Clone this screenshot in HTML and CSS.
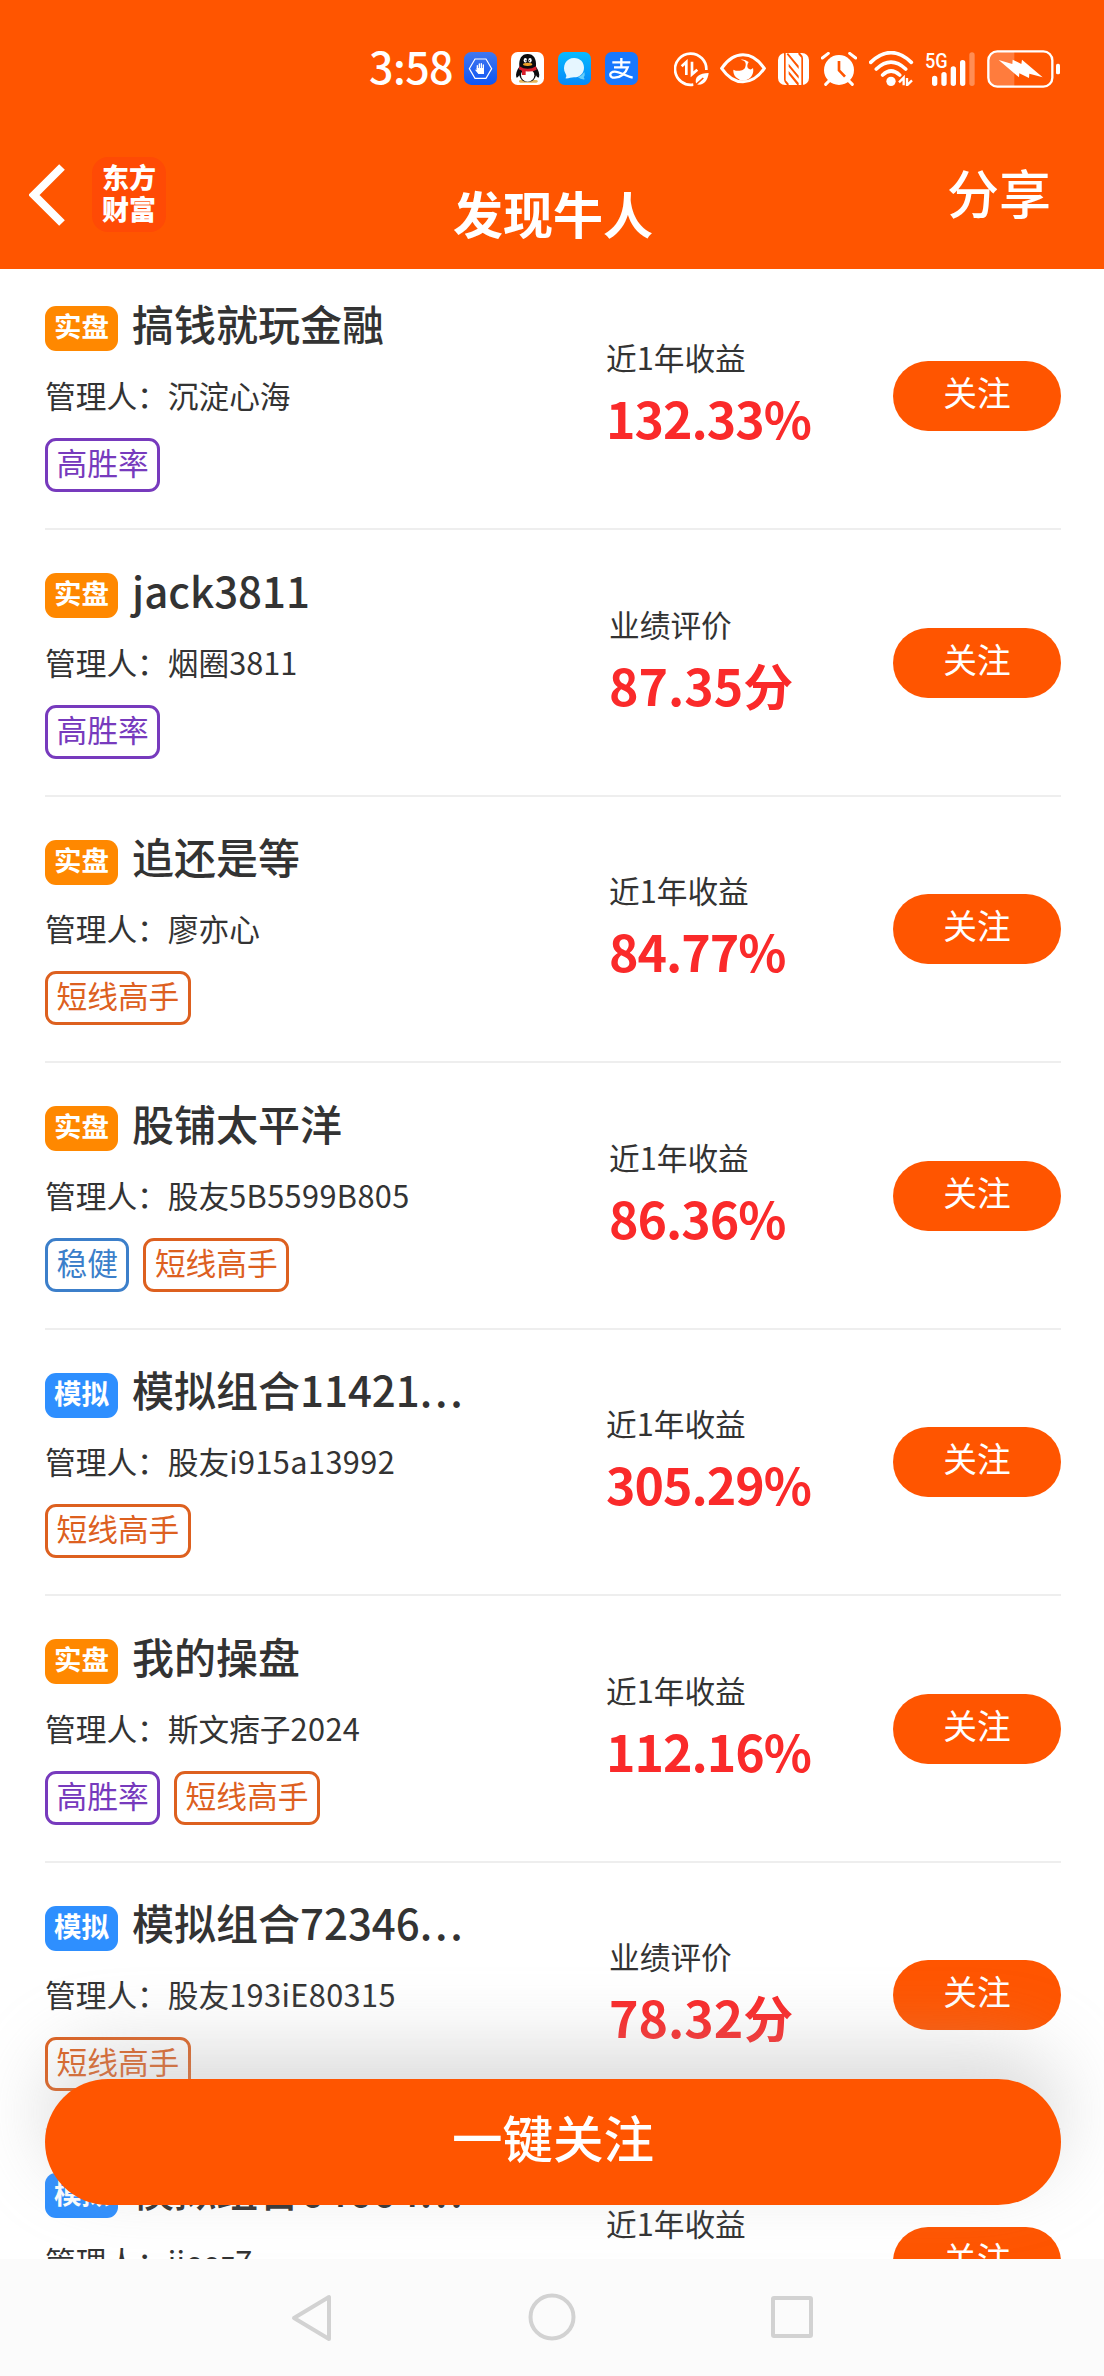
FILE: index.html
```html
<!DOCTYPE html>
<html lang="zh-CN">
<head>
  <meta charset="UTF-8" />
  <meta name="viewport" content="width=device-width, initial-scale=1.0"/>
  <title>发现牛人</title>
  <link rel="stylesheet" href="styles.css">
</head>
<body>

  <header class="header">
    <div class="status-bar">
      <span class="clock">3:58</span>
      <div class="app-icons">
        <svg width="33" height="33" viewBox="0 0 99 99">
          <defs>
            <linearGradient id="handBg" x1="0" y1="0" x2="0" y2="1"><stop offset="0" stop-color="#4277ee"/><stop offset="1" stop-color="#0d55f5"/></linearGradient>
          </defs>
          <rect width="99" height="99" rx="22" fill="url(#handBg)"/>
          <path d="M33 21H66L83 50 66 79H33L16 50Z" fill="none" stroke="#fff" stroke-width="3.5"/>
          <path d="M40 50V41M46 48V36M52 48V35M58 50V39" stroke="#fff" stroke-width="4" stroke-linecap="round"/>
          <path d="M38 48H60V66H43L34 55Q34 51 38 54Z" fill="#fff"/>
        </svg>
        <svg width="33" height="33" viewBox="0 0 99 99">
          <rect width="99" height="99" rx="20" fill="#fff"/>
          <path d="M28 88H76" stroke="#e5b75a" stroke-width="8" stroke-linecap="round"/>
          <path d="M25 44C23 20 32 6 50 6S77 20 75 44C82 54 87 66 84 76 80 79 77 73 75 70 72 83 64 90 50 90S28 83 25 70C22 74 19 79 16 76 13 66 18 54 25 44Z" fill="#0c0c0e"/>
          <ellipse cx="50" cy="70" rx="20" ry="19" fill="#fff"/>
          <ellipse cx="43" cy="25" rx="5" ry="7" fill="#fff"/>
          <ellipse cx="57" cy="25" rx="5" ry="7" fill="#fff"/>
          <circle cx="45" cy="26" r="2" fill="#111"/>
          <circle cx="55" cy="26" r="2" fill="#111"/>
          <ellipse cx="50" cy="37" rx="14" ry="5" fill="#eea329"/>
          <path d="M25 43Q50 58 75 43L77 53Q62 61 44 58V69H33V56L24 52Z" fill="#d81e2b"/>
        </svg>
        <svg width="33" height="33" viewBox="0 0 99 99">
          <defs>
            <linearGradient id="chatBg" x1="0" y1="0" x2="0" y2="1"><stop offset="0" stop-color="#08baff"/><stop offset="1" stop-color="#0789f8"/></linearGradient>
          </defs>
          <rect width="99" height="99" rx="20" fill="url(#chatBg)"/>
          <path d="M60 76Q72 72 79 60 82 72 77 75L80 82Q68 83 60 76Z" fill="#68cffb"/>
          <path d="M48 18C67 18 78 31 78 47S66 76 48 76C39 76 32 80 22 79 27 74 25 69 22 64 11 43 24 18 48 18Z" fill="#e6f6ff"/>
        </svg>
        <svg width="33" height="33" viewBox="0 0 99 99">
          <rect width="99" height="99" rx="20" fill="#1778fe"/>
          <path d="M22 31H76M49 18V45M27 46H68C62 64 47 77 29 77 12 77 11 59 29 59 45 59 63 73 83 77" fill="none" stroke="#fff" stroke-width="7"/>
        </svg>
      </div>
      <div class="system-icons">
        <svg width="35" height="36" viewBox="0 0 105 108">
          <path d="M97 57A47 47 0 1 0 58 101" fill="none" stroke="#fff" stroke-width="8"/>
          <path d="M23 46 37 33V72M54 32V70L70 56" fill="none" stroke="#fff" stroke-width="8"/>
          <path d="M104 66C76 66 59 78 67 100 88 105 101 90 104 66Z" fill="#fff"/>
          <path d="M60 106 88 81" stroke="#ff5500" stroke-width="5"/>
        </svg>
        <svg class="eye" width="46" height="31" viewBox="0 0 138 93">
          <path d="M5 46C42-8 96-8 133 46 96 100 42 100 5 46Z" fill="none" stroke="#fff" stroke-width="9"/>
          <path d="M62 20C78 22 79 33 76 41 75 51 56 58 40 50A30 30 0 1 0 99 45Q92 53 84 46 79 38 86 27 74 17 62 20Z" fill="#fff"/>
        </svg>
        <svg class="nfc" width="31" height="32" viewBox="0 0 93 96">
          <rect width="93" height="96" rx="21" fill="#fff"/>
          <path d="M18 0H23V82L32 92V96H27Q18 88 18 80Z" fill="#ff5500"/>
          <path d="M75 96H70V14L61 4V0H66Q75 8 75 16Z" fill="#ff5500"/>
          <path d="M32 32 62 68V77L32 41ZM32 54 62 90V96H58L32 64ZM30 0 62 38V48L26 4Z" fill="#ff5500"/>
        </svg>
        <svg class="alarm" width="36" height="34" viewBox="0 0 108 102">
          <circle cx="54" cy="54" r="45" fill="#fff"/>
          <path d="M4 18 22 4M86 4 104 18M25 86 14 97M83 86 94 97" stroke="#fff" stroke-width="9" stroke-linecap="round"/>
          <path d="M54 27V55L72 74" fill="none" stroke="#ff5500" stroke-width="8"/>
        </svg>
        <svg class="wifi" width="45" height="35" viewBox="0 0 135 105">
          <path d="M5 34Q66-24 127 34M22 54Q66 13 110 54M41 72Q66 48 92 72" fill="none" stroke="#fff" stroke-width="11" stroke-linecap="round"/>
          <circle cx="66" cy="91" r="14" fill="#fff"/>
          <path d="M90 94 104 80V103M114 81V103L129 88" fill="none" stroke="#fff" stroke-width="7"/>
        </svg>
        <svg class="signal" width="51" height="36" viewBox="0 0 153 108">
          <text x="0" y="51" class="net-label" textLength="68" lengthAdjust="spacingAndGlyphs">5G</text>
          <path d="M29 82V97M57 71V97M85 54V97M113 35V97" stroke="#fff" stroke-width="16" stroke-linecap="round"/>
          <path d="M141 12V97" stroke="#ff8d54" stroke-width="16" stroke-linecap="round"/>
        </svg>
        <svg class="battery" width="74" height="38" viewBox="0 0 222 114">
          <path d="M32 5H82V109H32Q6 108 6 83V31Q6 6 32 5Z" fill="#ff7c3d"/>
          <rect x="4" y="4" width="192" height="106" rx="27" fill="none" stroke="#fff" stroke-width="7"/>
          <path d="M35 30 76 42 77 29 103 42 105 29 167 82 127 71 126 84 97 70 96 82Z" fill="#fff"/>
          <rect x="207" y="41" width="12" height="32" rx="5" fill="#fff"/>
        </svg>
      </div>
    </div>

    <div class="title-bar">
      <div class="title-left">
        <svg class="back" width="38" height="62" viewBox="0 0 38 62"><path d="M33 3 5 31 33 59" fill="none" stroke="#fff" stroke-width="8"/></svg>
        <div class="logo">东方<br>财富</div>
      </div>
      <h1>发现牛人</h1>
      <span class="share">分享</span>
    </div>
  </header>

  <main class="list">
    <div class="row">
      <div class="info">
        <div class="name"><span class="badge real">实盘</span>搞钱就玩金融</div>
        <div class="manager">管理人：沉淀心海</div>
        <div class="tags"><span class="tag purple">高胜率</span></div>
      </div>
      <div class="stat wide"><span class="label">近1年收益</span><span class="value percent">132.33%</span></div>
      <button class="follow">关注</button>
    </div>

    <div class="row">
      <div class="info">
        <div class="name"><span class="badge real">实盘</span>jack3811</div>
        <div class="manager">管理人：烟圈3811</div>
        <div class="tags"><span class="tag purple">高胜率</span></div>
      </div>
      <div class="stat"><span class="label">业绩评价</span><span class="value">87.35分</span></div>
      <button class="follow">关注</button>
    </div>

    <div class="row">
      <div class="info">
        <div class="name"><span class="badge real">实盘</span>追还是等</div>
        <div class="manager">管理人：廖亦心</div>
        <div class="tags"><span class="tag orange">短线高手</span></div>
      </div>
      <div class="stat"><span class="label">近1年收益</span><span class="value percent">84.77%</span></div>
      <button class="follow">关注</button>
    </div>

    <div class="row">
      <div class="info">
        <div class="name"><span class="badge real">实盘</span>股铺太平洋</div>
        <div class="manager">管理人：股友<span class="code">5B5599B805</span></div>
        <div class="tags"><span class="tag blue">稳健</span><span class="tag orange">短线高手</span></div>
      </div>
      <div class="stat"><span class="label">近1年收益</span><span class="value percent">86.36%</span></div>
      <button class="follow">关注</button>
    </div>

    <div class="row">
      <div class="info">
        <div class="name"><span class="badge sim">模拟</span>模拟组合11421<span class="dots">...</span></div>
        <div class="manager">管理人：股友<span class="code">i915a13992</span></div>
        <div class="tags"><span class="tag orange">短线高手</span></div>
      </div>
      <div class="stat wide"><span class="label">近1年收益</span><span class="value percent">305.29%</span></div>
      <button class="follow">关注</button>
    </div>

    <div class="row">
      <div class="info">
        <div class="name"><span class="badge real">实盘</span>我的操盘</div>
        <div class="manager">管理人：斯文痞子<span class="code">2024</span></div>
        <div class="tags"><span class="tag purple">高胜率</span><span class="tag orange">短线高手</span></div>
      </div>
      <div class="stat wide"><span class="label">近1年收益</span><span class="value percent">112.16%</span></div>
      <button class="follow">关注</button>
    </div>

    <div class="row">
      <div class="info">
        <div class="name"><span class="badge sim">模拟</span>模拟组合72346<span class="dots">...</span></div>
        <div class="manager">管理人：股友<span class="code">193iE80315</span></div>
        <div class="tags"><span class="tag orange">短线高手</span></div>
      </div>
      <div class="stat"><span class="label">业绩评价</span><span class="value">78.32分</span></div>
      <button class="follow">关注</button>
    </div>

    <div class="row">
      <div class="info">
        <div class="name"><span class="badge sim">模拟</span>模拟组合64664<span class="dots">...</span></div>
        <div class="manager">管理人：<span class="code">jjeez7</span></div>
      </div>
      <div class="stat wide"><span class="label">近1年收益</span></div>
      <button class="follow">关注</button>
    </div>

    <button class="follow-all">一键关注</button>
  </main>

  <nav class="nav-bar">
    <svg width="50" height="52" viewBox="0 0 50 52"><path d="M42 5V47L7 26Z"/></svg>
    <svg width="50" height="52" viewBox="0 0 50 52"><circle cx="25" cy="25" r="21.5"/></svg>
    <svg width="50" height="52" viewBox="0 0 50 52"><rect x="6" y="6" width="38" height="38" rx="1"/></svg>
  </nav>

</body>
</html>
```
FILE: styles.css
```css
* {
  box-sizing: border-box;
}

body {
  margin: 0;
  height: 2376px;
  display: flex;
  flex-direction: column;
  background-color: #fff;
  color: #333;
  font-family: "Noto Sans CJK SC", sans-serif;
  overflow: hidden;
}

button {
  border: none;
  font-family: inherit;
  color: #fff;
  background-color: #ff5500;
}

/* Header */
.header {
  height: 269px;
  flex: none;
  background-color: #ff5500;
  color: #fff;
}

.status-bar {
  height: 137px;
  display: flex;
  justify-content: flex-end;
  align-items: center;
  padding-right: 43px;
}

.clock {
  font-size: 43px;
  font-weight: 500;
  letter-spacing: -0.6px;
  line-height: 60px;
  margin-right: 11px;
  margin-bottom: 7px;
}

.app-icons {
  display: flex;
  gap: 14px;
  margin-right: 36px;
}

.system-icons {
  display: flex;
  align-items: center;
}

.eye {
  margin-left: 11px;
}

.nfc {
  margin-left: 12px;
}

.alarm,
.wifi {
  margin-left: 12px;
}

.signal {
  margin-left: 11px;
  overflow: visible;
}

.battery {
  margin-left: 11px;
}

.net-label {
  font-family: Roboto, sans-serif;
  font-size: 62px;
  font-weight: 500;
  fill: #fff;
}

.title-bar {
  height: 115px;
  display: grid;
  grid-template-columns: 1fr auto 1fr;
  align-items: center;
  padding: 0 53px 0 29px;
}

.title-left {
  display: flex;
  align-items: center;
  gap: 25px;
}

.logo {
  width: 74px;
  height: 75px;
  padding-top: 4px;
  border-radius: 16px;
  background-color: #ff4a05;
  font-size: 27px;
  font-weight: 900;
  line-height: 32px;
  text-align: center;
}

.title-bar h1 {
  margin: 35px 0 0 26px;
  font-size: 50px;
  line-height: 60px;
  font-weight: bold;
}

.share {
  justify-self: end;
  margin-bottom: 5px;
  font-size: 52px;
  font-weight: 500;
  line-height: 60px;
}

/* List */
.list {
  position: relative;
  height: 1990px;
  flex: none;
  padding: 0 43px 0 45px;
  overflow: hidden;
}

.row {
  height: 266.6px;
  display: grid;
  grid-template-columns: 564px 1fr 168px;
  align-items: start;
  border-bottom: 2px solid #eee;
}

.row:first-child {
  margin-top: -5.6px;
}

.info {
  padding-top: 29.5px;
}

.name {
  display: flex;
  align-items: center;
  height: 60px;
  font-size: 42px;
  font-weight: 500;
  line-height: 60px;
}

.dots {
  letter-spacing: 2.8px;
}

.badge {
  width: 73px;
  height: 45px;
  margin: 12px 14px 0 0;
  border-radius: 11px;
  color: #fff;
  font-size: 27.5px;
  font-weight: bold;
  line-height: 38px;
  text-align: center;
}

.badge.real {
  background-color: #ff8800;
}

.badge.sim {
  background-color: #2e8fff;
}

.manager {
  margin-top: 20px;
  font-size: 30.7px;
  line-height: 44px;
}

.code {
  letter-spacing: 0.4px;
}

.tags {
  display: flex;
  gap: 14px;
  margin-top: 21px;
}

.tag {
  height: 54px;
  padding: 0 8.5px;
  border: 3px solid;
  border-radius: 11px;
  font-size: 30.7px;
  line-height: 41px;
}

.tag.purple {
  color: #773abd;
}

.tag.orange {
  color: #dd601f;
}

.tag.blue {
  color: #3c7fca;
}

.stat {
  display: flex;
  flex-direction: column;
  padding-top: 71.5px;
}

.stat.wide {
  margin-left: -3px;
}

.label {
  font-size: 30.7px;
  line-height: 44px;
}

.value {
  margin-top: 8px;
  color: #fa2a2a;
  font-size: 50px;
  font-weight: bold;
  line-height: 60px;
}

.percent {
  letter-spacing: -1px;
}

.follow {
  width: 168px;
  height: 70px;
  margin-top: 97.5px;
  padding: 0 0 8px;
  border-radius: 35px;
  font-size: 33.7px;
  line-height: 62px;
}

/* Floating button over the list */
.follow-all {
  position: absolute;
  left: 45px;
  right: 43px;
  bottom: 54px;
  height: 126px;
  padding: 0 0 13px;
  border-radius: 63px;
  font-size: 50.5px;
  font-weight: 500;
  line-height: 60px;
  box-shadow: 0 -30px 75px rgba(170, 170, 170, 0.42);
}

/* Android navigation */
.nav-bar {
  flex: 1;
  display: flex;
  justify-content: center;
  align-items: center;
  gap: 190px;
  background-color: #fbfbfb;
}

.nav-bar svg {
  fill: none;
  stroke: #d2d2d2;
  stroke-width: 4;
  stroke-linejoin: round;
}
```
